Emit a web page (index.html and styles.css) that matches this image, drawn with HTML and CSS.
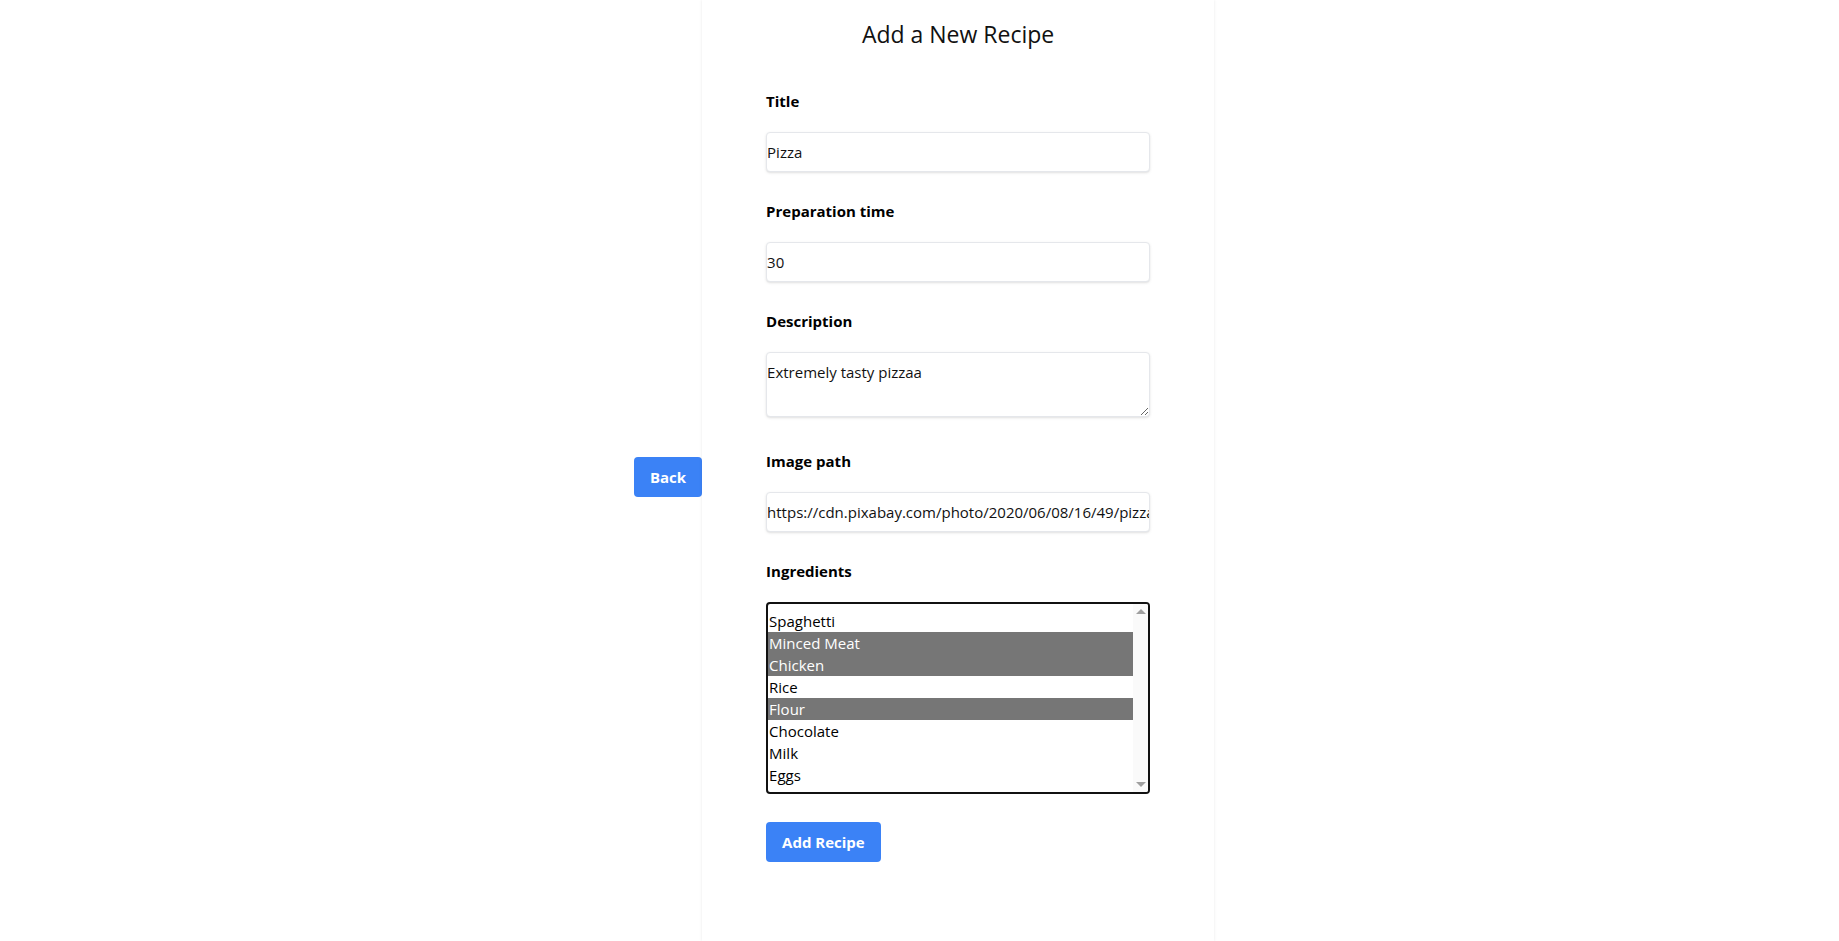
FILE: index.html
```html
<!DOCTYPE html>
<html lang="en">
<head>
<meta charset="utf-8">
<title>Add a New Recipe</title>
<link rel="stylesheet" href="styles.css">
</head>
<body>
<div class="page">
  <button class="btn btn-back" type="button">Back</button>
  <main class="panel">
    <h1 class="heading">Add a New Recipe</h1>
    <form class="form">
      <div class="field">
        <label class="label" for="title">Title</label>
        <input class="input" id="title" type="text" value="Pizza">
      </div>
      <div class="field">
        <label class="label" for="prep">Preparation time</label>
        <input class="input" id="prep" type="text" value="30">
      </div>
      <div class="field field-text">
        <label class="label" for="desc">Description</label>
        <textarea class="textarea" id="desc">Extremely tasty pizzaa</textarea>
      </div>
      <div class="field">
        <label class="label" for="img">Image path</label>
        <input class="input" id="img" type="text" value="https://cdn.pixabay.com/photo/2020/06/08/16/49/pizza-5275191_1280.jpg">
      </div>
      <div class="field field-list">
        <label class="label">Ingredients</label>
        <div class="listbox" role="listbox" aria-multiselectable="true">
          <div class="options">
            <div class="option" role="option">Spaghetti</div>
            <div class="option selected" role="option">Minced Meat</div>
            <div class="option selected" role="option">Chicken</div>
            <div class="option" role="option">Rice</div>
            <div class="option selected" role="option">Flour</div>
            <div class="option" role="option">Chocolate</div>
            <div class="option" role="option">Milk</div>
            <div class="option" role="option">Eggs</div>
          </div>
          <div class="scrollbar">
            <span class="arrow arrow-up"></span>
            <span class="arrow arrow-down"></span>
          </div>
        </div>
      </div>
      <div class="actions">
        <button class="btn btn-submit" type="button">Add Recipe</button>
      </div>
    </form>
  </main>
</div>
</body>
</html>
```
FILE: styles.css
```css
* {
  box-sizing: border-box;
}

html, body {
  margin: 0;
  padding: 0;
  background: #ffffff;
}

body {
  font-family: "Open Sans", "Noto Sans", "Liberation Sans", sans-serif;
  font-size: 15px;
  line-height: 24px;
  color: #000000;
}

.page {
  display: flex;
  justify-content: center;
  align-items: center;
  min-height: 100vh;
  padding-left: 9px;
}

.btn {
  font-family: inherit;
  font-size: 15px;
  font-weight: 700;
  line-height: 24px;
  color: #ffffff;
  background: #3b82f6;
  border: none;
  border-radius: 4px;
  padding: 8px 16px;
  cursor: pointer;
}

.btn-back {
  margin-top: 13px;
}

.panel {
  width: 512px;
  min-height: 100vh;
  align-self: stretch;
  padding: 18px 64px 40px;
  background: #ffffff;
  box-shadow: 0 0 3px rgba(0, 0, 0, 0.09);
}

.heading {
  margin: 0 0 39px;
  text-align: center;
  font-size: 23px;
  line-height: 32px;
  font-weight: 400;
  color: #111111;
}

.form {
  display: flex;
  flex-direction: column;
}

.field {
  display: flex;
  flex-direction: column;
  margin-bottom: 27px;
}

.field-text {
  margin-bottom: 32px;
}

.field-list {
  margin-bottom: 28px;
}

.label {
  display: block;
  font-weight: 700;
  margin-bottom: 19px;
}

.input,
.textarea {
  display: block;
  width: 384px;
  font-family: inherit;
  font-size: 15px;
  line-height: 24px;
  color: #111111;
  background: #ffffff;
  border: 1px solid #e5e7eb;
  border-radius: 4px;
  box-shadow: 0 1px 3px rgba(0, 0, 0, 0.1), 0 1px 2px -1px rgba(0, 0, 0, 0.1);
  padding: 7px 0;
  outline: none;
}

.input {
  height: 40px;
}

.textarea {
  height: 65px;
  resize: vertical;
}

.listbox {
  display: flex;
  width: 384px;
  height: 192px;
  border: 2px solid #111111;
  border-radius: 4px;
  overflow: hidden;
}

.options {
  flex: 1;
  padding: 6px 0;
}

.option {
  line-height: 22px;
  height: 22px;
  padding-left: 1px;
  color: #000000;
  white-space: nowrap;
}

.option.selected {
  background: #767676;
  color: #ffffff;
}

.scrollbar {
  width: 15px;
  background: #fafafa;
  display: flex;
  flex-direction: column;
  justify-content: space-between;
  align-items: center;
  padding: 5px 0;
}

.arrow {
  width: 0;
  height: 0;
  border-left: 5px solid transparent;
  border-right: 5px solid transparent;
}

.arrow-up {
  border-bottom: 5px solid #a0a0a0;
}

.arrow-down {
  border-top: 5px solid #a0a0a0;
}

.actions {
  display: flex;
}
```
